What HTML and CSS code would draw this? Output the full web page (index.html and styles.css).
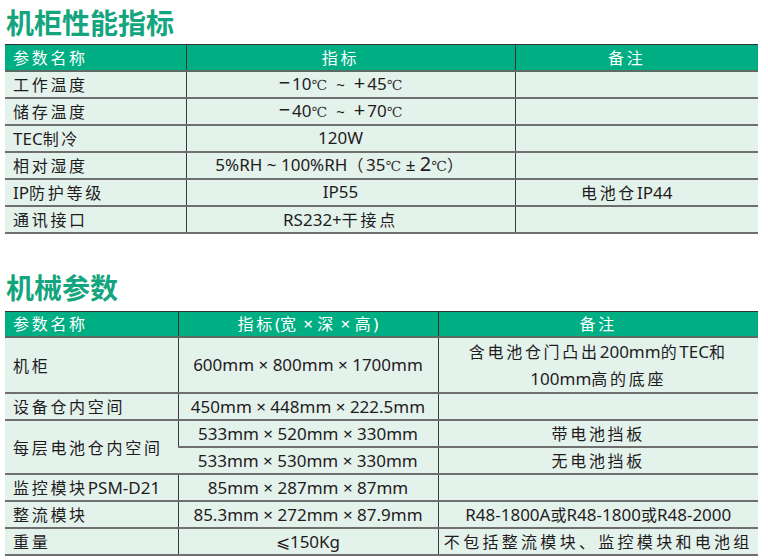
FILE: index.html
```html
<!DOCTYPE html>
<html lang="zh">
<head>
<meta charset="utf-8">
<link rel="stylesheet" href="styles.css">
</head>
<body>
<div class="page">
  <h1 class="title">机柜性能指标</h1>
  <table class="spec t1">
    <colgroup><col class="c1a"><col class="c2a"><col class="c3a"></colgroup>
    <thead>
      <tr><th class="left"><span class="zh">参数名称</span></th><th class="mid off"><span class="zh">指标</span></th><th class="mid off"><span class="zh">备注</span></th></tr>
    </thead>
    <tbody>
      <tr><td class="left"><span class="zh">工作温度</span></td><td class="mid off"><span class="sign">−</span>10<span class="deg">℃</span><span class="op">~</span><span class="sign">+</span>45<span class="deg">℃</span></td><td class="mid off"></td></tr>
      <tr><td class="left"><span class="zh">储存温度</span></td><td class="mid off"><span class="sign">−</span>40<span class="deg">℃</span><span class="op">~</span><span class="sign">+</span>70<span class="deg">℃</span></td><td class="mid off"></td></tr>
      <tr><td class="left">TEC<span class="zh">制冷</span></td><td class="mid off">120W</td><td class="mid off"></td></tr>
      <tr><td class="left"><span class="zh">相对湿度</span></td><td class="mid off">5%RH ~ 100%RH<span class="zh">（</span>35<span class="deg">℃</span> ± <span class="big">2</span><span class="deg">℃</span><span class="zh">）</span></td><td class="mid off"></td></tr>
      <tr><td class="left">IP<span class="zh">防护等级</span></td><td class="mid off">IP55</td><td class="mid off"><span class="zh">电池仓</span>IP44</td></tr>
      <tr><td class="left"><span class="zh">通讯接口</span></td><td class="mid off">RS232+<span class="zh">干接点</span></td><td class="mid off"></td></tr>
    </tbody>
  </table>

  <h1 class="title second">机械参数</h1>
  <table class="spec t2">
    <colgroup><col class="c1b"><col class="c2b"><col class="c3b"></colgroup>
    <thead>
      <tr><th class="left"><span class="zh">参数名称</span></th><th class="mid"><span class="zh">指标</span>(<span class="zh">宽</span> × <span class="zh">深</span> × <span class="zh">高</span>)</th><th class="mid"><span class="zh">备注</span></th></tr>
    </thead>
    <tbody>
      <tr class="tall"><td class="left"><span class="zh">机柜</span></td><td class="mid">600mm × 800mm × 1700mm</td><td class="mid"><span class="zh">含电池仓门凸出</span>200mm<span class="zh">的</span>TEC<span class="zh">和</span><br>100mm<span class="zh">高的底座</span></td></tr>
      <tr><td class="left"><span class="zh">设备仓内空间</span></td><td class="mid">450mm × 448mm × 222.5mm</td><td class="mid"></td></tr>
      <tr><td class="left" rowspan="2"><span class="zh">每层电池仓内空间</span></td><td class="mid">533mm × 520mm × 330mm</td><td class="mid"><span class="zh">带电池挡板</span></td></tr>
      <tr><td class="mid">533mm × 530mm × 330mm</td><td class="mid"><span class="zh">无电池挡板</span></td></tr>
      <tr><td class="left"><span class="zh">监控模块</span>PSM-D21</td><td class="mid">85mm × 287mm × 87mm</td><td class="mid"></td></tr>
      <tr><td class="left"><span class="zh">整流模块</span></td><td class="mid">85.3mm × 272mm × 87.9mm</td><td class="mid">R48-1800A<span class="zh0">或</span>R48-1800<span class="zh0">或</span>R48-2000</td></tr>
      <tr><td class="left"><span class="zh">重量</span></td><td class="mid">⩽150Kg</td><td class="mid"><span class="zh fill">不包括整流模块、监控模块和电池组</span></td></tr>
    </tbody>
  </table>
  <div class="scroll"><div class="thumb"></div></div>
</div>
</body>
</html>
```

FILE: styles.css
```css
html, body {
  margin: 0;
  padding: 0;
  background: #ffffff;
}

.page {
  width: 768px;
  height: 560px;
  overflow: hidden;
  font-family: "Noto Sans", "Noto Sans CJK SC", sans-serif;
  color: #1f1c1d;
}

.title {
  margin: 0;
  padding-left: 6px;
  height: 44px;
  line-height: 44px;
  font-family: "Noto Sans CJK SC", sans-serif;
  font-size: 28px;
  font-weight: 700;
  color: #14a57e;
}

.title.second {
  margin-top: 33px;
  height: 44px;
  line-height: 40px;
}

.spec {
  margin-left: 5px;
  width: 753px;
  border-collapse: collapse;
  table-layout: fixed;
  font-size: 17px;
}

.c1a { width: 181px; }
.c2a { width: 329px; }
.c3a { width: 243px; }
.c1b { width: 173px; }
.c2b { width: 260px; }
.c3b { width: 320px; }

.spec th {
  background: #00ae83;
  color: #ffffff;
  font-weight: 400;
  height: 24.5px;
  padding: 0;
  border-top: 1px solid #333;
  border-bottom: 2px solid #5c6a64;
  border-left: 1px solid #333;
  line-height: 20px;
}

.spec td {
  background: #e4f2ec;
  height: 25px;
  padding: 0;
  border-bottom: 2px solid #6f6f6f;
  border-left: 1px solid #3c3c3c;
  line-height: 20px;
}

.spec th:first-child,
.spec td:first-child {
  border-left: none;
}

.spec tr td[rowspan] + td {
  border-left: 1px solid #3c3c3c;
}

.left {
  text-align: left;
  padding-left: 8px !important;
}

.mid {
  text-align: center;
}

.off {
  padding-right: 20px !important;
}

.zh {
  font-family: "Noto Sans CJK SC", sans-serif;
  font-size: 16px;
  letter-spacing: 2.7px;
}

.zh.fill {
  letter-spacing: 3.3px;
}

.zh0 {
  font-family: "Noto Sans CJK SC", sans-serif;
  font-size: 16px;
}

.sign {
  display: inline-block;
  padding-right: 2px;
  font-size: 20px;
}

.op {
  display: inline-block;
  padding: 0 9px;
  font-size: 15px;
}

.big {
  font-size: 20px;
}

.deg {
  font-family: "DejaVu Serif", serif;
  font-size: 14px;
  color: #333;
}

.t2 tbody tr.tall td {
  height: 52px;
  line-height: 26px;
}

.scroll {
  margin-top: 5px;
  height: 6px;
  background: #eeeeee;
}

.thumb {
  width: 660px;
  height: 6px;
  background: #c9c9c9;
}
```
